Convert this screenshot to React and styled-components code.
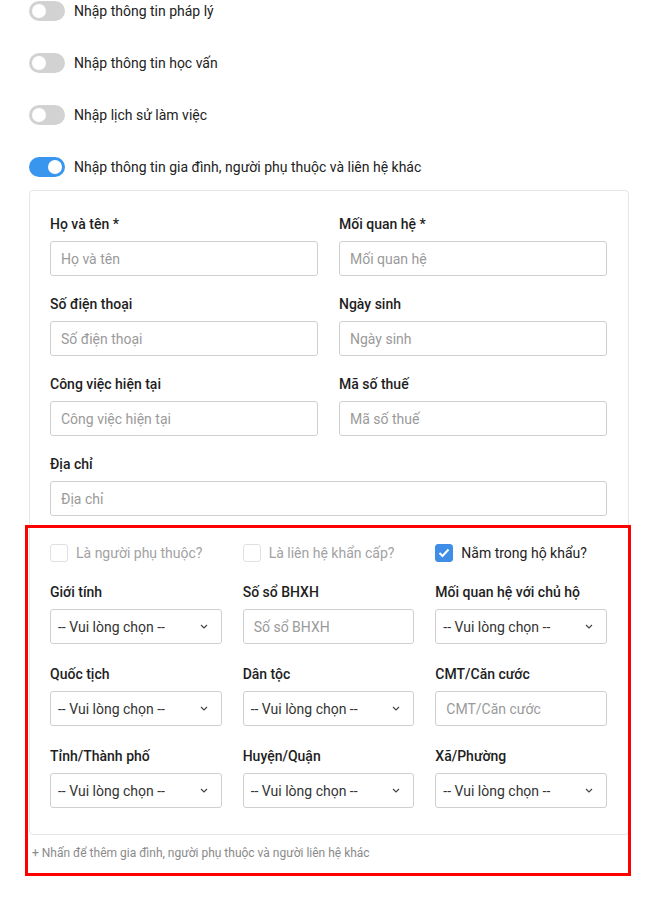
import React from "react";
import styled, { createGlobalStyle } from "styled-components";

const Global = createGlobalStyle`
  html, body { margin: 0; padding: 0; background: #fff; }
  body { font-family: Roboto, "Noto Sans", "Liberation Sans", sans-serif; color: #222; }
  * { box-sizing: border-box; }
`;

const Page = styled.div`
  width: 658px;
  min-height: 897px;
  padding: 1px 29px 0 29px;
`;

const ToggleList = styled.div`
  display: flex;
  flex-direction: column;
  gap: 32px;
`;

const ToggleRow = styled.div`
  display: flex;
  align-items: center;
  gap: 9px;
  height: 20px;
  font-size: 14px;
  color: #222;
`;

const Track = styled.span`
  position: relative;
  display: inline-block;
  width: 36px;
  height: 20px;
  border-radius: 10px;
  background: ${(p) => (p.$on ? "#3896ef" : "#d2d2d2")};
`;

const Knob = styled.span`
  position: absolute;
  top: 3px;
  left: ${(p) => (p.$on ? "19px" : "3px")};
  width: 14px;
  height: 14px;
  border-radius: 50%;
  background: #fff;
`;

const Wrap = styled.div`
  position: relative;
  margin-top: 13px;
  padding-bottom: 24px;
`;

const Card = styled.div`
  border: 1px solid #e6e6e6;
  border-radius: 4px;
  padding: 23px 21px 26px 20px;
`;

const TwoCol = styled.div`
  display: grid;
  grid-template-columns: 1fr 1fr;
  column-gap: 21px;
  row-gap: 18px;
`;

const ThreeCol = styled.div`
  display: grid;
  grid-template-columns: 1fr 1fr 1fr;
  column-gap: 21px;
  row-gap: 20px;
`;

const Field = styled.div`
  display: flex;
  flex-direction: column;
  gap: 7px;
  grid-column: ${(p) => (p.$full ? "1 / -1" : "auto")};
`;

const Label = styled.div`
  font-size: 14px;
  line-height: 20px;
  font-weight: 500;
  color: #1e1e1e;
`;

const Input = styled.input`
  height: 35px;
  width: 100%;
  border: 1px solid #cfcfcf;
  border-radius: 3px;
  padding: 0 10px;
  font-family: inherit;
  font-size: 14px;
  color: #333;
  outline: none;
  &::placeholder { color: #9a9a9a; }
`;

const SelectBox = styled.div`
  height: 35px;
  border: 1px solid #cfcfcf;
  border-radius: 3px;
  padding: 0 13px 0 7px;
  display: flex;
  align-items: center;
  justify-content: space-between;
  font-size: 14px;
  color: #333;
`;

const CheckRow = styled.div`
  display: grid;
  grid-template-columns: 1fr 1fr 1fr;
  column-gap: 21px;
  margin-top: 28px;
`;

const CheckItem = styled.label`
  display: flex;
  align-items: center;
  gap: 8px;
  font-size: 14px;
  height: 18px;
  color: ${(p) => (p.$disabled ? "#a2a2a2" : "#222")};
`;

const Box = styled.span`
  width: 18px;
  height: 18px;
  border-radius: 3px;
  border: 1px solid ${(p) => (p.$checked ? "#3f8de6" : "#e0e0e0")};
  background: ${(p) => (p.$checked ? "#3f8de6" : "#fff")};
  display: flex;
  align-items: center;
  justify-content: center;
`;

const Lower = styled.div`
  margin-top: 20px;
`;

const AddLink = styled.div`
  padding: 10px 0 0 3px;
  font-size: 12px;
  line-height: 16px;
  color: #8a8a8a;
`;

const Highlight = styled.div`
  position: absolute;
  left: -4px;
  top: 335px;
  width: 606px;
  height: 351px;
  border: 3px solid #f00;
  pointer-events: none;
`;

const Chevron = () => (
  <svg width="8" height="5" viewBox="0 0 8 5" fill="none">
    <path d="M1 1l3 3 3-3" stroke="#444" strokeWidth="1.2" />
  </svg>
);

const Check = () => (
  <svg width="12" height="10" viewBox="0 0 12 10" fill="none">
    <path d="M1.5 5l3 3 6-6.5" stroke="#fff" strokeWidth="2" />
  </svg>
);

function Toggle({ on, children }) {
  return (
    <ToggleRow>
      <Track $on={on}>
        <Knob $on={on} />
      </Track>
      {children}
    </ToggleRow>
  );
}

function TextField({ label, full }) {
  return (
    <Field $full={full}>
      <Label>{label}</Label>
      <Input placeholder={label.replace(" *", "")} readOnly />
    </Field>
  );
}

function SelectField({ label }) {
  return (
    <Field>
      <Label>{label}</Label>
      <SelectBox>
        <span>-- Vui lòng chọn --</span>
        <Chevron />
      </SelectBox>
    </Field>
  );
}

function CheckBox({ checked, disabled, children }) {
  return (
    <CheckItem $disabled={disabled}>
      <Box $checked={checked}>{checked && <Check />}</Box>
      {children}
    </CheckItem>
  );
}

export default function App() {
  return (
    <Page>
      <Global />
      <ToggleList>
        <Toggle>Nhập thông tin pháp lý</Toggle>
        <Toggle>Nhập thông tin học vấn</Toggle>
        <Toggle>Nhập lịch sử làm việc</Toggle>
        <Toggle on>Nhập thông tin gia đình, người phụ thuộc và liên hệ khác</Toggle>
      </ToggleList>
      <Wrap>
        <Card>
          <TwoCol>
            <TextField label="Họ và tên *" />
            <TextField label="Mối quan hệ *" />
            <TextField label="Số điện thoại" />
            <TextField label="Ngày sinh" />
            <TextField label="Công việc hiện tại" />
            <TextField label="Mã số thuế" />
            <TextField label="Địa chỉ" full />
          </TwoCol>
          <CheckRow>
            <CheckBox disabled>Là người phụ thuộc?</CheckBox>
            <CheckBox disabled>Là liên hệ khẩn cấp?</CheckBox>
            <CheckBox checked>Nằm trong hộ khẩu?</CheckBox>
          </CheckRow>
          <Lower>
            <ThreeCol>
              <SelectField label="Giới tính" />
              <TextField label="Số sổ BHXH" />
              <SelectField label="Mối quan hệ với chủ hộ" />
              <SelectField label="Quốc tịch" />
              <SelectField label="Dân tộc" />
              <TextField label="CMT/Căn cước" />
              <SelectField label="Tỉnh/Thành phố" />
              <SelectField label="Huyện/Quận" />
              <SelectField label="Xã/Phường" />
            </ThreeCol>
          </Lower>
        </Card>
        <AddLink>+ Nhấn để thêm gia đình, người phụ thuộc và người liên hệ khác</AddLink>
        <Highlight />
      </Wrap>
    </Page>
  );
}
